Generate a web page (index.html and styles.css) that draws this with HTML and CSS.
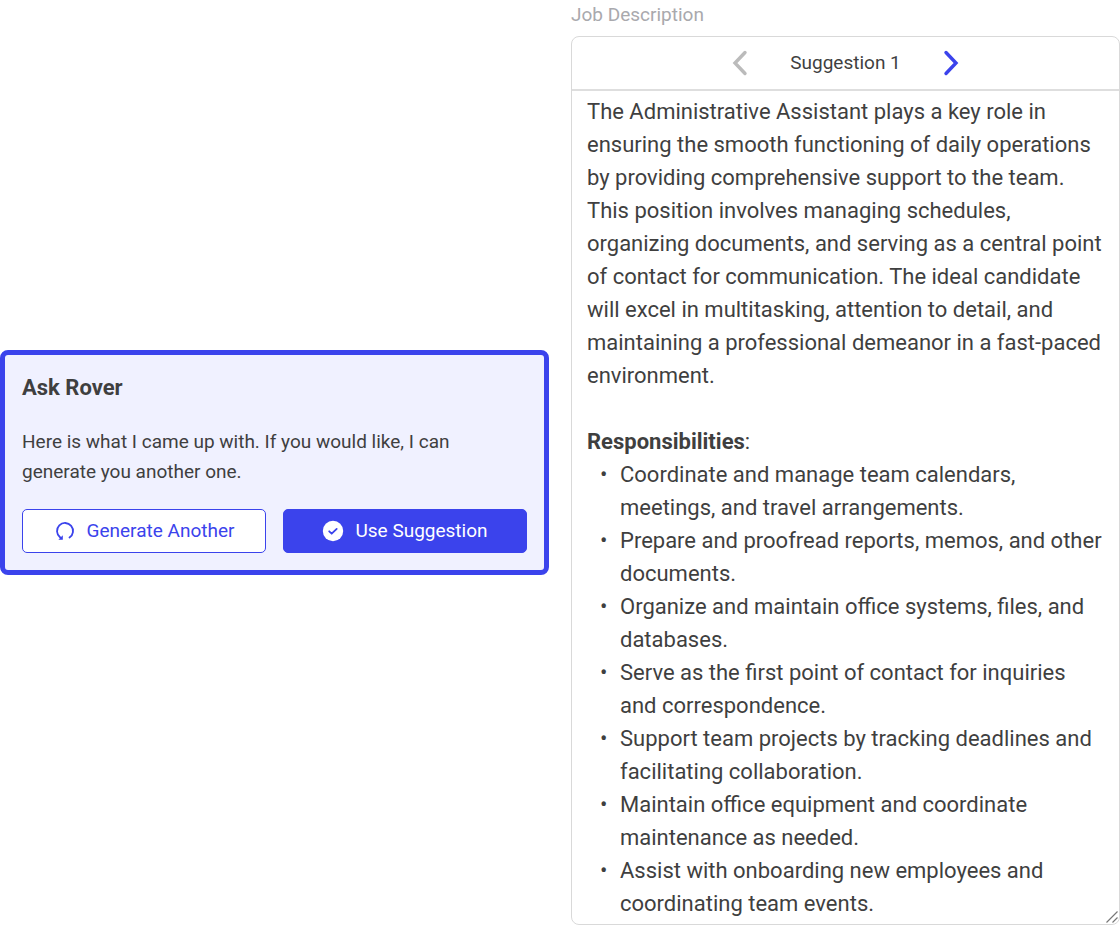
FILE: index.html
```html
<!DOCTYPE html>
<html lang="en">
<head>
	<meta charset="UTF-8">
	<meta name="viewport" content="width=device-width, initial-scale=1">
	<title>Job Description</title>
	<link rel="stylesheet" href="styles.css">
</head>
<body>
	<main class="page">
		<section class="rover">
			<h2 class="rover-title">Ask Rover</h2>
			<p class="rover-text">Here is what I came up with. If you would like, I can generate you another one.</p>
			<div class="rover-actions">
				<button type="button" class="btn btn-outline">
					<svg class="icon" width="22" height="22" viewBox="0 0 22 22" aria-hidden="true">
						<path d="M15.500 17.600A8 8 0 1 0 6 17.200L7 18.300" fill="none" stroke="currentColor" stroke-width="1.800" stroke-linecap="round"/>
						<path d="M8.800 15.300v4.400H4.400z" fill="currentColor"/>
					</svg>
					Generate Another
				</button>
				<button type="button" class="btn btn-primary">
					<svg class="icon" width="22" height="22" viewBox="0 0 22 22" aria-hidden="true">
						<circle cx="11" cy="11" r="10.200" fill="#fff"/>
						<path d="M7.200 11.300l2.500 2.400 5-4.800" fill="none" stroke="#3b43ec" stroke-width="1.800" stroke-linecap="round" stroke-linejoin="round"/>
					</svg>
					Use Suggestion
				</button>
			</div>
		</section>

		<section class="job">
			<div class="job-label" id="job-label">Job Description</div>
			<div class="job-box">
				<div class="pager">
					<button type="button" class="pager-btn" aria-label="Previous suggestion" disabled>
						<svg width="16" height="26" viewBox="0 0 16 26" aria-hidden="true">
							<path d="M13 2.500L3 13l10 10.500" fill="none" stroke="currentColor" stroke-width="3.400" stroke-linecap="round"/>
						</svg>
					</button>
					<span>Suggestion 1</span>
					<button type="button" class="pager-btn" aria-label="Next suggestion">
						<svg width="16" height="26" viewBox="0 0 16 26" aria-hidden="true">
							<path d="M3 2.500L13 13 3 23.500" fill="none" stroke="currentColor" stroke-width="3.400" stroke-linecap="round"/>
						</svg>
					</button>
				</div>
				<div class="editor" role="textbox" aria-multiline="true" aria-labelledby="job-label" contenteditable="true" spellcheck="false">
					<p>The Administrative Assistant plays a key role in ensuring the smooth functioning of daily operations by providing comprehensive support to the team. This position involves managing schedules, organizing documents, and serving as a central point of contact for communication. The ideal candidate will excel in multitasking, attention to detail, and maintaining a professional demeanor in a fast-paced environment.</p>
					<p><br></p>
					<p><strong>Responsibilities</strong>:</p>
					<ul>
						<li>Coordinate and manage team calendars, meetings, and travel arrangements.</li>
						<li>Prepare and proofread reports, memos, and other documents.</li>
						<li>Organize and maintain office systems, files, and databases.</li>
						<li>Serve as the first point of contact for inquiries and correspondence.</li>
						<li>Support team projects by tracking deadlines and facilitating collaboration.</li>
						<li>Maintain office equipment and coordinate maintenance as needed.</li>
						<li>Assist with onboarding new employees and coordinating team events.</li>
					</ul>
				</div>
				<svg class="grip" width="14" height="14" viewBox="0 0 14 14" aria-hidden="true">
					<path d="M1.500 12.500l11-11M7.500 12.500l5-5" stroke="#777" stroke-width="1.200"/>
				</svg>
			</div>
		</section>
	</main>
</body>
</html>
```
FILE: styles.css
```css
* {
	box-sizing: border-box;
}
body {
	margin: 0;
	background: #fff;
	color: #3f3f3f;
	font-family: Roboto, "Liberation Sans", sans-serif;
	font-size: 19px;
	line-height: 30px;
}
h2, p, ul {
	margin: 0;
}
button {
	font: inherit;
	cursor: pointer;
}
.page {
	display: grid;
	grid-template-columns: 1fr 1fr;
	gap: 22px;
	align-items: center;
	min-height: 100vh;
}

/* assistant card */
.rover {
	padding: 17px;
	border: 5px solid #3b43ec;
	border-radius: 8px;
	background: #f0f1ff;
}
.rover-title {
	font-size: 22px;
	font-weight: 700;
	line-height: 32px;
}
.rover-text {
	margin: 23px 0 22px;
}
.rover-actions {
	display: grid;
	grid-template-columns: 1fr 1fr;
	gap: 17px;
}
.btn {
	display: flex;
	align-items: center;
	justify-content: center;
	gap: 11px;
	height: 44px;
	padding: 0 16px;
	border: 1px solid #3b43ec;
	border-radius: 5px;
}
.btn-outline {
	background: #fff;
	color: #3b43ec;
}
.btn-primary {
	background: #3b43ec;
	color: #fff;
}
.icon {
	flex: none;
}

/* job description field */
.job-label {
	margin-bottom: 6px;
	color: #a9a9ad;
}
.job-box {
	position: relative;
	border: 1px solid #d9d9d9;
	border-radius: 8px;
}
.pager {
	display: flex;
	align-items: center;
	justify-content: center;
	gap: 42px;
	height: 54px;
	border-bottom: 2px solid #dedede;
}
.pager-btn {
	display: flex;
	padding: 0;
	border: 0;
	background: none;
	color: #3b43ec;
}
.pager-btn:disabled {
	color: #bbb;
	cursor: default;
}
.editor {
	padding: 4px 15px;
	font-size: 22px;
	line-height: 33px;
	outline: none;
}
.editor ul {
	padding: 0;
	list-style: none;
}
.editor li {
	display: grid;
	grid-template-columns: 33px 1fr;
}
.editor li::before {
	content: "•";
	padding-left: 13px;
}
.grip {
	position: absolute;
	right: 0;
	bottom: 0;
}
```
